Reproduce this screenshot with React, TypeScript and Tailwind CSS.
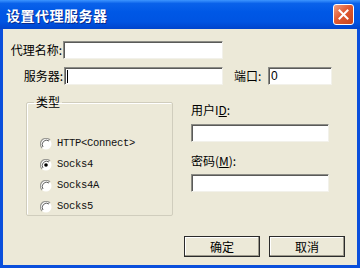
import React from 'react'

const cjk = { fontFamily: '"Noto Sans CJK SC", "Liberation Sans", sans-serif' }

const Field = ({ w, value, caret }: { w: string; value?: string; caret?: boolean }) => (
  <div
    className={`${w} h-[18px] bg-white border border-t-[#8c8c86] border-l-[#8c8c86] border-b-[#f2f1ea] border-r-[#f2f1ea] shadow-[inset_1px_1px_0_#5a5a58] flex items-center pl-[2px] text-[12px] leading-none text-black`}
    style={{ fontFamily: '"Liberation Sans", sans-serif' }}
  >
    {caret && <span className="w-px h-[13px] bg-black" />}
    {value}
  </div>
)

const Radio = ({ checked }: { checked?: boolean }) => (
  <svg width="12" height="12" viewBox="0 0 12 12" className="shrink-0">
    <circle cx="6" cy="6" r="5.5" fill="#fff" />
    <path d="M10 2 A5.5 5.5 0 0 0 2 10" fill="none" stroke="#9a9a94" strokeWidth="1.2" />
    <path d="M9 3 A4.3 4.3 0 0 0 3 9" fill="none" stroke="#606060" strokeWidth="1" />
    {checked && <circle cx="6" cy="6" r="1.8" fill="#000" />}
  </svg>
)

const options = [
  { label: 'HTTP<Connect>', checked: false },
  { label: 'Socks4', checked: true },
  { label: 'Socks4A', checked: false },
  { label: 'Socks5', checked: false },
]

const Button = ({ children }: { children: React.ReactNode }) => (
  <button
    className="w-[76px] h-[21px] bg-[#ece9d8] border border-[#2b2b2b] shadow-[inset_-1px_-1px_0_#9d9a8c,inset_1px_1px_0_#fff] flex items-center justify-center text-[12px] text-black leading-none"
    style={cjk}
  >
    {children}
  </button>
)

const App = () => {
  return (
    <div className="w-[360px] h-[268px] bg-[#0a4fdc] flex flex-col overflow-hidden" style={cjk}>
      <div className="h-[29px] shrink-0 flex items-center justify-between pl-[6px] pr-[6px] bg-[linear-gradient(180deg,#3d95ff_0%,#0a62ea_12%,#0058e6_40%,#0054e2_75%,#0044cc_100%)]">
        <span className="text-white font-bold text-[14px] leading-none tracking-[0.5px] [text-shadow:1px_1px_0_#0a2a8a]">
          设置代理服务器
        </span>
        <div className="w-[21px] h-[21px] rounded-[3px] border border-white bg-[linear-gradient(135deg,#f0a084_0%,#e05a32_45%,#c8441c_100%)] flex items-center justify-center">
          <svg width="11" height="11" viewBox="0 0 11 11">
            <path d="M1.5 1.5 L9.5 9.5 M9.5 1.5 L1.5 9.5" stroke="#fff" strokeWidth="2" strokeLinecap="square" />
          </svg>
        </div>
      </div>

      <div className="flex-1 mx-[3px] mb-[3px] bg-[#ece9d8] flex flex-col pt-[12px] text-[12px] text-black leading-none">
        <div className="flex items-center h-[18px]">
          <span className="w-[60px] text-right pr-[1px]">代理名称:</span>
          <Field w="w-[160px]" />
        </div>
        <div className="flex items-center h-[18px] mt-[8px]">
          <span className="w-[61px] text-right pr-[1px]">服务器:</span>
          <Field w="w-[159px]" caret />
          <span className="ml-[11px] w-[34px]">端口:</span>
          <Field w="w-[64px]" value="0" />
        </div>

        <div className="flex mt-[11px]">
          <fieldset className="ml-[23px] w-[147px] h-[120px] border border-[#d0cdbd] rounded-[2px] shadow-[inset_1px_1px_0_#fff] px-[13px]">
            <legend className="px-[2px] ml-[-6px] leading-[12px] text-[12px]">类型</legend>
            <div className="flex flex-col mt-[25px]">
              {options.map((o) => (
                <div key={o.label} className="flex items-center h-[21px] gap-[5px]">
                  <Radio checked={o.checked} />
                  <span
                    className="text-[10.5px] text-[#111]"
                    style={{ fontFamily: '"Liberation Mono", monospace', letterSpacing: '-0.3px' }}
                  >
                    {o.label}
                  </span>
                </div>
              ))}
            </div>
          </fieldset>

          <div className="ml-[18px] flex flex-col pt-[8px]">
            <span className="h-[12px]">
              用户I<span className="underline">D</span>:
            </span>
            <div className="mt-[8px]">
              <Field w="w-[138px]" />
            </div>
            <span className="h-[12px] mt-[13px]">
              密码(<span className="underline">M</span>):
            </span>
            <div className="mt-[7px]">
              <Field w="w-[138px]" />
            </div>
          </div>
        </div>

        <div className="flex justify-end gap-[9px] pr-[12px] mt-[20px]">
          <Button>确定</Button>
          <Button>取消</Button>
        </div>
      </div>
    </div>
  )
}

export default App
